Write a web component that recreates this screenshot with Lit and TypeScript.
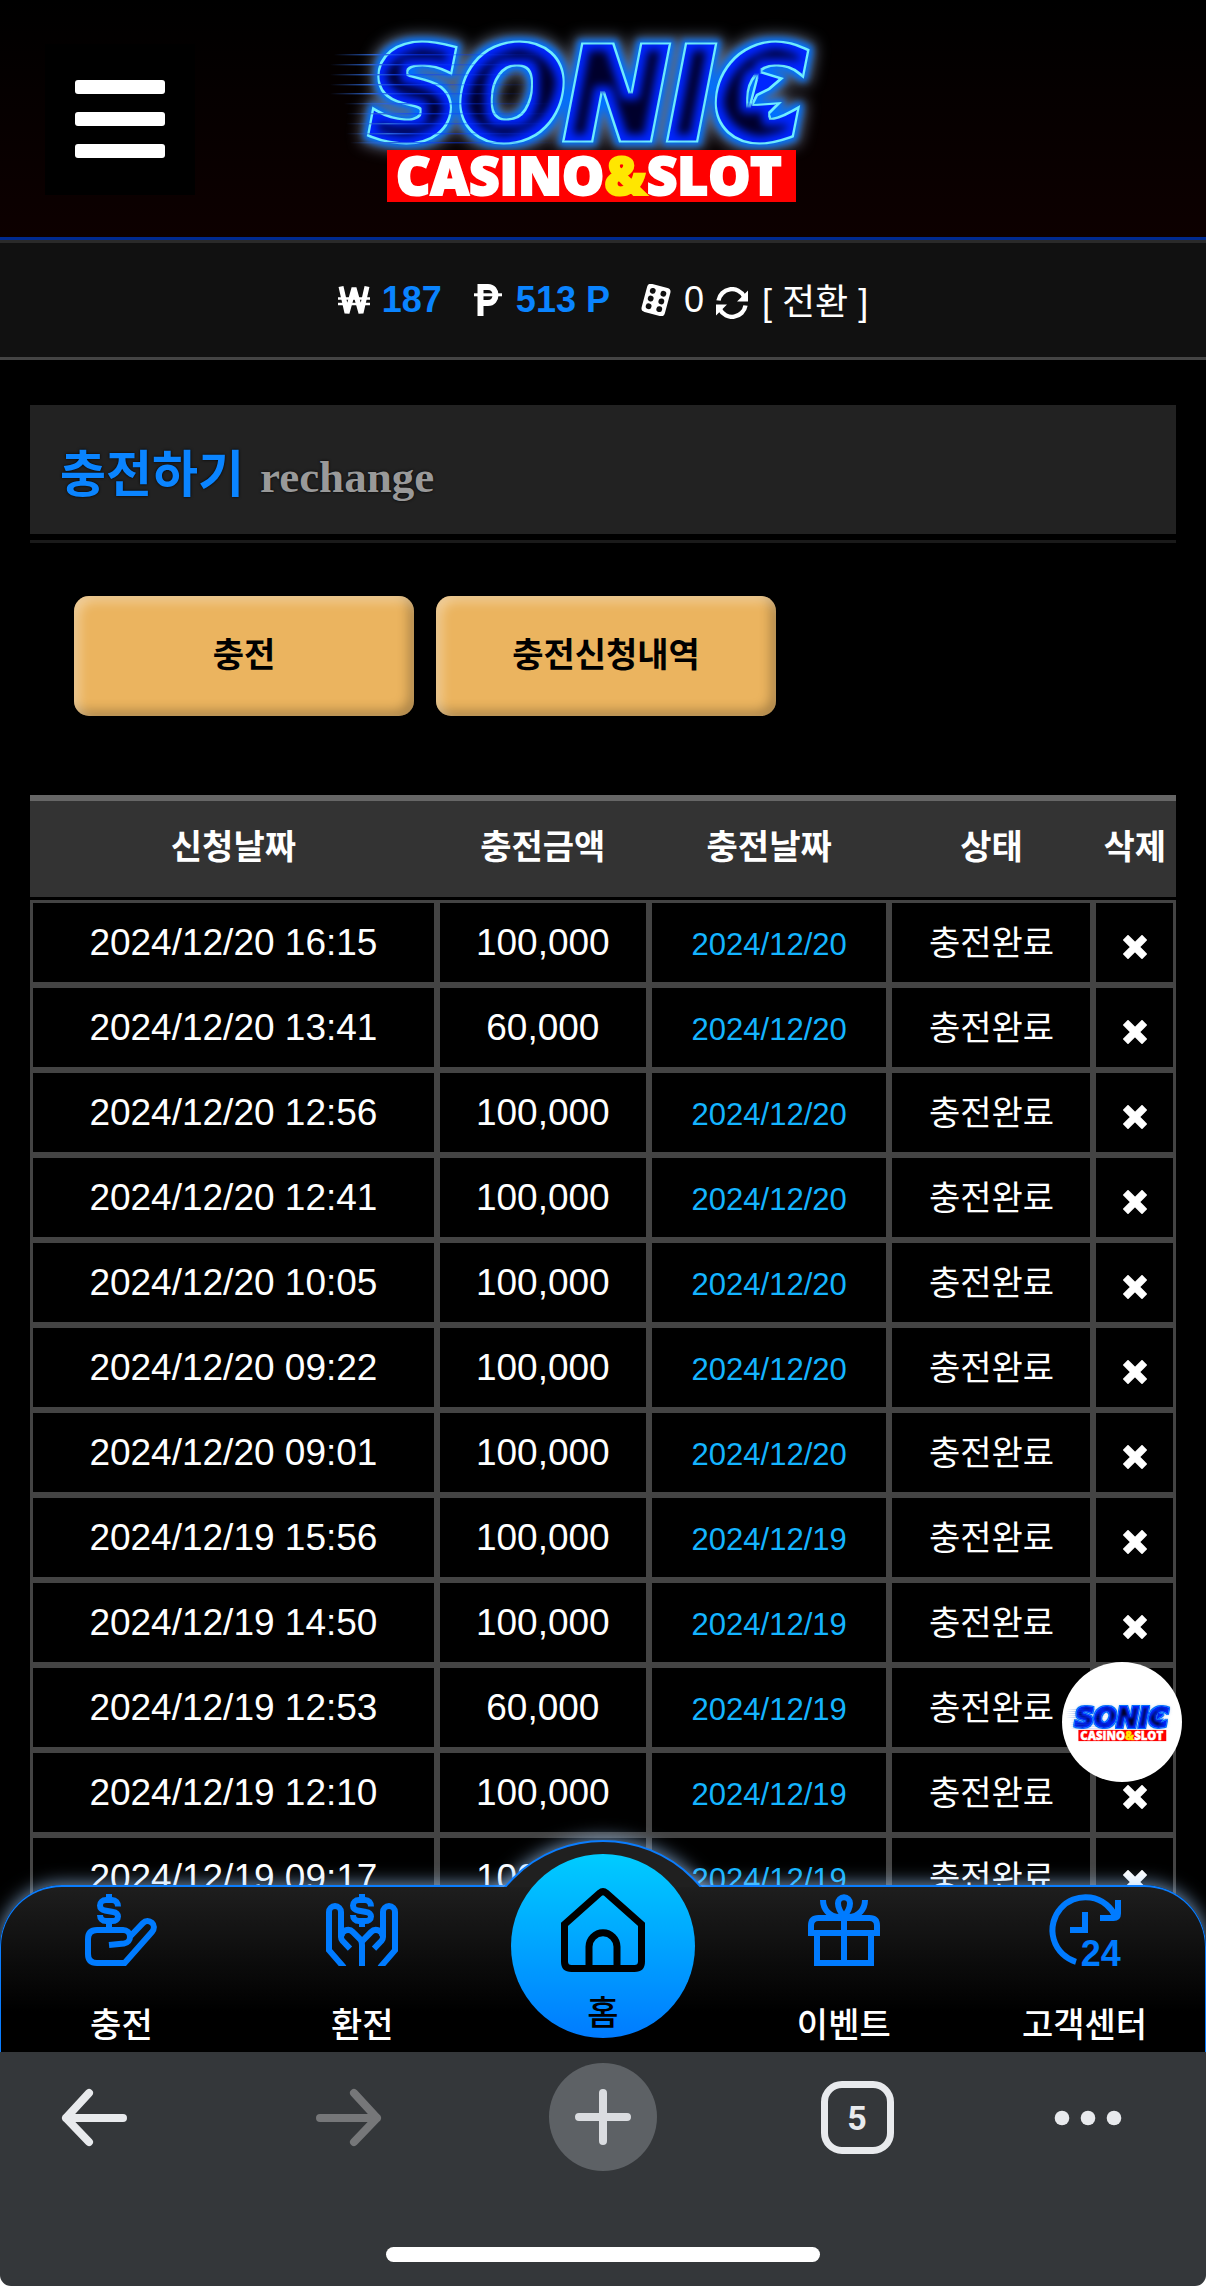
import { LitElement, html, css, svg } from "lit";
import { customElement, property, state } from "lit/decorators.js";

const STREAKS = [
  [14, 34], [10, 44], [10, 54], [10, 64], [10, 73], [24, 83], [26, 93], [26, 103], [26, 113], [30, 122],
];

@customElement("sonic-logo")
class SonicLogo extends LitElement {
  static styles = css`
    :host { display: block; }
    svg { display: block; width: 100%; overflow: visible; }
    .word {
      font: italic bold 124px "DejaVu Sans", sans-serif;
      stroke: #000;
      stroke-width: 9;
    }
    .tag {
      font: 800 53px "Open Sans", "Noto Sans", sans-serif;
      fill: #fff;
      stroke: #fff;
      stroke-width: 2;
    }
    .amp { fill: #ffe600; stroke: #ffe600; }
  `;

  render() {
    return html`
      <svg viewBox="0 0 540 182" role="img" aria-label="SONIC CASINO&SLOT">
        <defs>
          <linearGradient id="streak" x1="0" x2="1" y1="0" y2="0">
            <stop offset="0" stop-color="#2a5cc0" stop-opacity="0"></stop>
            <stop offset="0.2" stop-color="#2a66d8"></stop>
            <stop offset="0.35" stop-color="#0a3cff" stop-opacity="0.6"></stop>
            <stop offset="1" stop-color="#0a3cff" stop-opacity="0"></stop>
          </linearGradient>
          <filter id="neon" x="-10%" y="-30%" width="120%" height="160%" color-interpolation-filters="sRGB">
            <feMorphology in="SourceAlpha" operator="dilate" radius="6" result="wide"></feMorphology>
            <feGaussianBlur in="wide" stdDeviation="7" result="haloShape"></feGaussianBlur>
            <feFlood flood-color="#a4bbe0" flood-opacity="0.55"></feFlood>
            <feComposite in2="haloShape" operator="in" result="halo"></feComposite>
            <feMorphology in="SourceAlpha" operator="dilate" radius="3" result="close"></feMorphology>
            <feGaussianBlur in="close" stdDeviation="3" result="glowShape"></feGaussianBlur>
            <feFlood flood-color="#0070ff"></feFlood>
            <feComposite in2="glowShape" operator="in" result="glow"></feComposite>
            <feFlood flood-color="#70eeff"></feFlood>
            <feComposite in2="SourceAlpha" operator="in" result="edge"></feComposite>
            <feMorphology in="SourceAlpha" operator="erode" radius="2" result="inner"></feMorphology>
            <feFlood flood-color="#0026ff"></feFlood>
            <feComposite in2="inner" operator="in" result="body"></feComposite>
            <feMorphology in="SourceAlpha" operator="erode" radius="8" result="deep"></feMorphology>
            <feGaussianBlur in="deep" stdDeviation="4" result="coreShape"></feGaussianBlur>
            <feFlood flood-color="#00002c"></feFlood>
            <feComposite in2="coreShape" operator="in" result="core"></feComposite>
            <feMerge>
              <feMergeNode in="halo"></feMergeNode>
              <feMergeNode in="glow"></feMergeNode>
              <feMergeNode in="edge"></feMergeNode>
              <feMergeNode in="body"></feMergeNode>
              <feMergeNode in="core"></feMergeNode>
            </feMerge>
          </filter>
        </defs>
        <g filter="url(#neon)">
          <text class="word" x="50" y="118">SONIC</text>
          <path d="M438 50L464 58L450 70L438 76L434 84L462 82L450 94L454 106L424 104Z"></path>
        </g>
        ${STREAKS.map(
          ([x, y]) => svg`<rect x=${x} y=${y} width="210" height="1.4" fill="url(#streak)"></rect>`
        )}
        <rect x="67" y="130" width="409" height="52" fill="#ff0000"></rect>
        <text class="tag" x="76" y="175">CASINO<tspan class="amp">&amp;</tspan>SLOT</text>
      </svg>
    `;
  }
}

const dollar = (cx: number) => svg`
  <g transform="translate(${cx - 8} 0)">
    <path d="M11 4.2C11 2.9 10.2 2 9 2H7C5.8 2 5 2.8 5 3.8S5.7 5.4 6.6 5.5L9.4 6C10.4 6.1 11 6.9 11 7.5 11 8.4 10.2 9 9 9H7C5.8 9 5 8.2 5 7"></path>
    <path d="M8 0V2M8 9V11"></path>
  </g>`;

const NAV_ICONS: Record<string, unknown> = {
  deposit: svg`
    ${dollar(8)}
    <path d="M8 17L13 16.5C14.3 16.3 15 15.3 15 14.3 15 13 14 12 12.7 12H4C2 12 1 13 1 15V20C1 22 2 23 4 23H13.2L22.3 12.7C23.2 11.6 23.2 10.4 22.3 9.6 21.4 8.8 20.2 8.8 19.3 9.7L14.8 14.4"></path>`,
  withdraw: svg`
    ${dollar(12)}
    <path d="M6 24.5L1 18.7V6A2 2 0 0 1 5 6V14.3Q5 15 5.5 15.6L8 18.2"></path>
    <path d="M5.2 14.2C5 12.2 7.6 11.2 9 12.7L11.4 15.1Q12 15.8 12 17V24"></path>
    <path d="M18 24.5L23 18.7V6A2 2 0 0 0 19 6V14.3Q19 15 18.5 15.6L16 18.2"></path>
    <path d="M18.8 14.2C19 12.2 16.4 11.2 15 12.7L12 15.8"></path>`,
  home: svg`
    <path d="M1 10.4L11.1 1.4Q12 .7 12.9 1.4L23 10.4V21Q23 23 21 23H3Q1 23 1 21Z"></path>
    <path d="M8 23V16.8A4 4 0 0 1 16 16.8V23"></path>`,
  event: svg`
    <path d="M1 13V10.5Q1 8 3.5 8H20.5Q23 8 23 10.5V13Z"></path>
    <path d="M3 13V23H21V13M12 8V23"></path>
    <path d="M12 7.5C10.4 5.6 10 4.4 10 3.1A2 2 0 0 1 14 3.1C14 4.4 13.6 5.6 12 7.5Z"></path>
    <path d="M5 2C5 5 7 7.5 10.5 7.7M19 2C19 5 17 7.5 13.5 7.7"></path>`,
  support: svg`
    <path d="M22.2 7.6A11 11 0 1 0 9 22.6"></path>
    <path d="M23 2V6.5Q23 8 21.5 8H17"></path>
    <path d="M12 6V12H7"></path>
    <text class="hours" x="10.6" y="24">24</text>`,
};

interface Entry {
  requested: string;
  amount: string;
  date: string;
  status: string;
}

const entry = (requested: string, amount = "100,000"): Entry => ({
  requested,
  amount,
  date: requested.split(" ")[0],
  status: "충전완료",
});

@customElement("bottom-nav")
class BottomNav extends LitElement {
  static styles = css`
    :host { display: block; }
    * { box-sizing: border-box; }
    .bar {
      position: relative;
      display: grid;
      grid-template-columns: repeat(5, 1fr);
      height: 167px;
      border: 2px solid #0a7dff;
      border-width: 2px 1px 0;
      border-radius: 62px 62px 0 0;
      background: linear-gradient(#1e1e1e, #000 75%);
      box-shadow: 0 -1px 18px rgba(160, 205, 255, 0.75);
    }
    .bump {
      position: absolute;
      left: calc(50% - 128px);
      top: -47px;
      width: 256px;
      height: 256px;
      border: 2px solid #0a7dff;
      border-radius: 50%;
      background: #202020;
      box-shadow: 0 -1px 18px rgba(160, 205, 255, 0.75);
      clip-path: inset(-40px -40px calc(100% - 47px) -40px);
    }
    .item {
      display: flex;
      flex-direction: column;
      align-items: center;
      justify-content: space-between;
      padding: 7px 0 2px;
      color: #fff;
      font: 500 34px/50px "Liberation Sans", "Noto Sans CJK KR", sans-serif;
      text-decoration: none;
    }
    .icon {
      width: 72px;
      height: 72px;
      fill: none;
      stroke: #007bff;
      stroke-width: 2;
    }
    .support .icon { overflow: visible; }
    .hours {
      font: bold 12px "Liberation Sans", sans-serif;
      fill: #007bff;
      stroke: none;
    }
    .home {
      position: relative;
      justify-self: center;
      width: 184px;
      height: 184px;
      margin-top: -33px;
      padding: 34px 0 0;
      justify-content: flex-start;
      gap: 16px;
      border-radius: 50%;
      background: linear-gradient(#00ccff, #007bff);
      color: #000;
    }
    .home .icon {
      width: 84px;
      height: 84px;
      stroke: #000;
    }
  `;

  items = [
    { icon: "deposit", label: "충전" },
    { icon: "withdraw", label: "환전" },
    { icon: "home", label: "홈" },
    { icon: "event", label: "이벤트" },
    { icon: "support", label: "고객센터" },
  ];

  render() {
    return html`
      <nav class="bar">
        <span class="bump"></span>
        ${this.items.map(
          ({ icon, label }) => html`
            <a class="item ${icon}" href="#${icon}">
              <svg class="icon" viewBox="0 0 24 24" aria-hidden="true">${NAV_ICONS[icon]}</svg>
              <span>${label}</span>
            </a>
          `
        )}
      </nav>
    `;
  }
}

@customElement("browser-bar")
class BrowserBar extends LitElement {
  static styles = css`
    :host { display: block; position: relative; background: #fff; }
    * { box-sizing: border-box; }
    .bar {
      display: flex;
      flex-direction: column;
      align-items: center;
      gap: 76px;
      padding: 11px 0 24px;
      border-radius: 0 0 11px 11px;
      background: #34373a;
    }
    .tools {
      display: grid;
      grid-template-columns: 222px 1fr 1fr 1fr 222px;
      width: 100%;
      height: 108px;
    }
    .tool {
      display: flex;
      align-items: center;
      justify-content: center;
      padding: 0;
      border: 0;
      background: none;
      color: #e8eaed;
    }
    .back { padding-right: 34px; }
    .menu { padding-right: 14px; }
    .tool:disabled { color: #767779; }
    .glyph {
      width: 72px;
      height: 72px;
      fill: none;
      stroke: currentColor;
      stroke-width: 8;
      stroke-linecap: round;
      stroke-linejoin: round;
    }
    .dots { fill: currentColor; stroke: none; }
    .plus {
      display: flex;
      align-items: center;
      justify-content: center;
      width: 108px;
      height: 108px;
      border-radius: 50%;
      background: #5d6165;
      color: #dadce0;
    }
    .count {
      width: 73px;
      height: 73px;
      border: 7px solid currentColor;
      border-radius: 21px;
      font: bold 34px/60px Roboto, sans-serif;
      text-align: center;
    }
    .handle {
      width: 36%;
      height: 15px;
      border-radius: 8px;
      background: #fff;
    }
  `;

  @property({ type: Number }) tabs = 5;

  render() {
    return html`
      <footer class="bar">
        <div class="tools">
          <button class="tool back" aria-label="뒤로">
            <svg class="glyph" viewBox="0 0 72 72"><path d="M65 37H8M31 12L8 37L31 61"></path></svg>
          </button>
          <button class="tool" aria-label="앞으로" disabled>
            <svg class="glyph" viewBox="0 0 72 72"><path d="M7 37H64M41 12L64 37L41 61"></path></svg>
          </button>
          <button class="tool" aria-label="새 탭">
            <span class="plus">
              <svg class="glyph" viewBox="0 0 72 72"><path d="M36 12V60M12 36H60"></path></svg>
            </span>
          </button>
          <button class="tool" aria-label="탭 목록"><span class="count">${this.tabs}</span></button>
          <button class="tool menu" aria-label="메뉴">
            <svg class="glyph dots" viewBox="0 0 72 72">
              <circle cx="10" cy="37" r="7.3"></circle>
              <circle cx="36" cy="37" r="7.3"></circle>
              <circle cx="62" cy="37" r="7.3"></circle>
            </svg>
          </button>
        </div>
        <span class="handle"></span>
      </footer>
    `;
  }
}

@customElement("app-root")
class AppRoot extends LitElement {
  static styles = css`
    :host {
      display: block;
      background: #000;
      color: #fff;
      font-family: "Liberation Sans", "Noto Sans CJK KR", sans-serif;
    }
    * { box-sizing: border-box; }
    button { font-family: inherit; cursor: pointer; }
    .screen {
      display: flex;
      flex-direction: column;
      height: 100vh;
    }
    .viewport {
      position: relative;
      flex: 1;
      min-height: 0;
    }
    .scroll {
      height: 100%;
      overflow-y: auto;
      scrollbar-width: none;
    }
    .head {
      display: grid;
      grid-template-columns: 150px minmax(0, 540px) 150px;
      justify-content: space-between;
      align-items: start;
      height: 240px;
      padding: 20px 71px 0 45px;
      border-bottom: 3px solid #002a90;
      background: linear-gradient(#000, #0d0000);
    }
    .burger {
      display: flex;
      flex-direction: column;
      align-items: center;
      gap: 18px;
      height: 151px;
      margin-top: 24px;
      padding: 36px 0 0;
      border: 0;
      background: #000;
    }
    .burger span {
      width: 90px;
      height: 14px;
      border-radius: 3px;
      background: #fff;
    }
    .wallet {
      display: flex;
      align-items: center;
      justify-content: center;
      gap: 30px;
      height: 120px;
      border-top: 3px solid #2a2a2a;
      border-bottom: 3px solid #444;
      background: #111;
      font-size: 36px;
      line-height: 44px;
    }
    .fund {
      display: flex;
      align-items: center;
      gap: 12px;
    }
    .fund b { color: #0a84ff; }
    .fund svg { display: block; width: 32px; height: 32px; }
    .swap {
      display: flex;
      align-items: center;
      gap: 14px;
      padding: 6px 0 0;
      border: 0;
      background: none;
      color: inherit;
      font-size: 36px;
      line-height: 44px;
    }
    .main { padding: 45px 30px 0; }
    .title {
      display: flex;
      align-items: baseline;
      gap: 16px;
      margin: 0;
      padding: 39px 30px 28px;
      background: #222;
      color: #0a84ff;
      font-size: 50px;
      line-height: 62px;
      text-shadow: 0 0 3px #000;
    }
    .title small {
      color: #999;
      font-family: "Liberation Serif", serif;
      font-size: 45px;
      line-height: 50px;
    }
    .rule {
      height: 3px;
      margin: 6px 0 53px;
      border: 0;
      background: #1a1a1a;
    }
    .tabs {
      display: flex;
      gap: 22px;
      padding: 0 44px;
      margin-bottom: 79px;
    }
    .tab {
      flex: 0 1 340px;
      height: 120px;
      padding: 0 0 8px;
      border: 0;
      border-radius: 15px;
      background: #ebb45f;
      box-shadow: inset 5px 5px 12px rgba(255, 255, 255, 0.38), inset -5px -5px 12px rgba(0, 0, 0, 0.28);
      color: #000;
      font-size: 34px;
      font-weight: bold;
    }
    .list {
      width: 100%;
      table-layout: fixed;
      border-collapse: separate;
      border-spacing: 0;
      font-size: 37px;
      line-height: 44px;
      text-align: center;
    }
    .when { width: 35.5%; }
    .sum { width: 18.5%; }
    .day { width: 21%; }
    .state { width: 17.8%; }
    .del { width: 7.2%; }
    .list th {
      height: 105px;
      padding: 0 0 4px;
      border-top: 6px solid #666;
      border-bottom: 3px solid #000;
      background: #333;
      background-clip: padding-box;
      font-size: 34px;
      white-space: nowrap;
    }
    .list td {
      height: 85px;
      padding: 0;
      border: 3px solid #444;
      white-space: nowrap;
    }
    .list .date { padding-top: 5px; color: #14b4ff; font-size: 31px; }
    .list .status { font-size: 34px; }
    .remove {
      display: block;
      margin: 0 auto;
      padding: 8px 0 0;
      border: 0;
      background: none;
    }
    .remove svg { display: block; width: 24px; height: 24px; }
    .nav {
      position: absolute;
      inset: auto 0 0 0;
    }
    .badge {
      position: absolute;
      right: 24px;
      bottom: 270px;
      display: grid;
      place-items: center;
      width: 120px;
      height: 120px;
      border-radius: 50%;
      background: #fff;
    }
    .badge sonic-logo { width: 116px; }
  `;

  @state() entries: Entry[] = [
    entry("2024/12/20 16:15"),
    entry("2024/12/20 13:41", "60,000"),
    entry("2024/12/20 12:56"),
    entry("2024/12/20 12:41"),
    entry("2024/12/20 10:05"),
    entry("2024/12/20 09:22"),
    entry("2024/12/20 09:01"),
    entry("2024/12/19 15:56"),
    entry("2024/12/19 14:50"),
    entry("2024/12/19 12:53", "60,000"),
    entry("2024/12/19 12:10"),
    entry("2024/12/19 09:17"),
  ];

  private removeEntry(target: Entry) {
    this.entries = this.entries.filter((e) => e !== target);
  }

  private wallet() {
    return html`
      <section class="wallet">
        <span class="fund">
          <svg viewBox="0 0 32 32" fill="none" stroke="#fff" aria-hidden="true">
            <path d="M3 2.5L9 29L16 4L23 29L29 2.5" stroke-width="5" stroke-linejoin="bevel"></path>
            <path d="M0 14.5H32M0 20H32" stroke-width="2.4"></path>
          </svg>
          <b>187</b>
        </span>
        <span class="fund">
          <svg viewBox="2 0 30 32" fill="none" stroke="#fff" aria-hidden="true">
            <path d="M9.5 32V3H17C27 3 27 19 17 19H9.5" stroke-width="6"></path>
            <path d="M3 10.8H31" stroke-width="3"></path>
          </svg>
          <b>513 P</b>
        </span>
        <span class="fund">
          <svg viewBox="0 0 32 32" aria-hidden="true">
            <g transform="rotate(15 16 16)">
              <rect x="4" y="1.5" width="24" height="29" rx="4" fill="#fff"></rect>
              <g fill="#111">
                <circle cx="10.5" cy="8" r="2.9"></circle>
                <circle cx="21.5" cy="8" r="2.9"></circle>
                <circle cx="10.5" cy="16" r="2.9"></circle>
                <circle cx="21.5" cy="16" r="2.9"></circle>
                <circle cx="10.5" cy="24" r="2.9"></circle>
                <circle cx="21.5" cy="24" r="2.9"></circle>
              </g>
            </g>
          </svg>
          <span>0</span>
          <button class="swap">
            <svg viewBox="0 0 32 32" aria-hidden="true">
              <path d="M2.5 13.5A13.6 13.6 0 0 1 28 9.5M29.5 18.5A13.6 13.6 0 0 1 4 22.5" fill="none" stroke="#fff" stroke-width="4.4"></path>
              <path d="M32 3.5V14.5H21ZM0 28.5V17.5H11Z" fill="#fff"></path>
            </svg>
            <span>[ 전환 ]</span>
          </button>
        </span>
      </section>
    `;
  }

  private table() {
    return html`
      <table class="list">
        <thead>
          <tr>
            <th class="when" scope="col">신청날짜</th>
            <th class="sum" scope="col">충전금액</th>
            <th class="day" scope="col">충전날짜</th>
            <th class="state" scope="col">상태</th>
            <th class="del" scope="col">삭제</th>
          </tr>
        </thead>
        <tbody>
          ${this.entries.map(
            (e) => html`
              <tr>
                <td>${e.requested}</td>
                <td>${e.amount}</td>
                <td class="date">${e.date}</td>
                <td class="status">${e.status}</td>
                <td>
                  <button class="remove" aria-label="삭제" @click=${() => this.removeEntry(e)}>
                    <svg viewBox="0 0 24 24">
                      <path d="M5 5L19 19M19 5L5 19" stroke="#fff" stroke-width="7.5" stroke-linecap="square" stroke-linejoin="round"></path>
                    </svg>
                  </button>
                </td>
              </tr>
            `
          )}
        </tbody>
      </table>
    `;
  }

  render() {
    return html`
      <div class="screen">
        <div class="viewport">
          <div class="scroll">
            <header class="head">
              <button class="burger" aria-label="전체 메뉴">
                <span></span><span></span><span></span>
              </button>
              <sonic-logo></sonic-logo>
            </header>
            ${this.wallet()}
            <main class="main">
              <h1 class="title">충전하기 <small>rechange</small></h1>
              <hr class="rule" />
              <div class="tabs">
                <button class="tab">충전</button>
                <button class="tab">충전신청내역</button>
              </div>
              ${this.table()}
            </main>
          </div>
          <bottom-nav class="nav"></bottom-nav>
          <a class="badge" href="#top"><sonic-logo></sonic-logo></a>
        </div>
        <browser-bar></browser-bar>
      </div>
    `;
  }
}
